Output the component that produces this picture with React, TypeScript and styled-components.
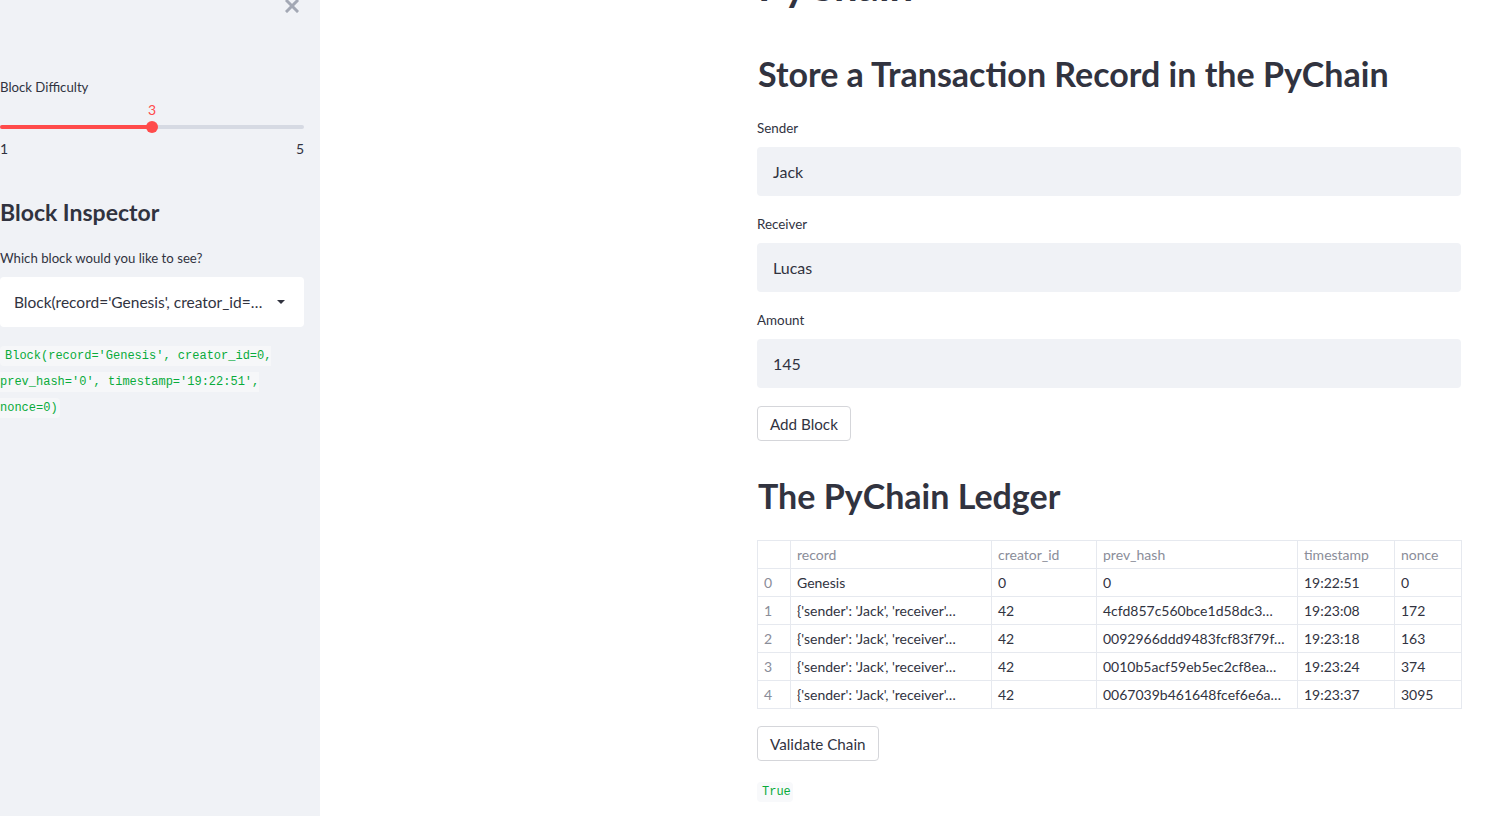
import React from "react";
import styled, { createGlobalStyle } from "styled-components";

const GlobalStyle = createGlobalStyle`
  html, body { margin: 0; padding: 0; }
  body {
    font-family: "Lato", "Noto Sans", sans-serif;
    color: #31333f;
    background: #ffffff;
    -webkit-font-smoothing: antialiased;
  }
  * { box-sizing: border-box; }
`;

const Page = styled.div`
  display: flex;
  width: 1500px;
  height: 816px;
  overflow: hidden;
`;

const Sidebar = styled.aside`
  width: 320px;
  flex: none;
  height: 816px;
  background: #f0f2f6;
  padding: 0 16px 0 0;
  display: flex;
  flex-direction: column;
`;

const CloseRow = styled.div`
  display: flex;
  justify-content: flex-end;
  margin-top: -1px;
  padding-right: 5px;
  height: 14px;
  color: #a3a8b4;
`;

const WidgetLabel = styled.div<{ $mt: number }>`
  margin-top: ${(p) => p.$mt}px;
  font-size: 13.2px;
  line-height: 20px;
  height: 20px;
  color: #31333f;
  white-space: nowrap;
`;

const SliderValue = styled.div`
  margin-top: 5px;
  height: 16px;
  line-height: 16px;
  font-size: 14px;
  color: #ff4b4b;
  display: flex;
  justify-content: center;
  width: 304px;
`;

const Track = styled.div`
  margin-top: 7px;
  position: relative;
  height: 4px;
  width: 304px;
  border-radius: 2px;
  background: #d6dae3;
`;

const TrackFill = styled.div`
  height: 4px;
  border-radius: 2px;
  background: #ff4b4b;
`;

const Thumb = styled.div`
  position: absolute;
  top: -4px;
  width: 12px;
  height: 12px;
  margin-left: -6px;
  border-radius: 50%;
  background: #ff4b4b;
`;

const TickRow = styled.div`
  margin-top: 10px;
  display: flex;
  justify-content: space-between;
  width: 304px;
  font-size: 14px;
  line-height: 20px;
  height: 20px;
`;

const SideHeading = styled.h2`
  margin: 38px 0 0;
  font-size: 23px;
  line-height: 30px;
  height: 30px;
  font-weight: 700;
  color: #31333f;
`;

const Select = styled.div`
  margin-top: 9px;
  width: 304px;
  height: 50px;
  background: #ffffff;
  border-radius: 4px;
  display: flex;
  align-items: center;
  padding: 0 18px 0 14px;
  font-size: 15.5px;
  gap: 12px;
`;

const SelectText = styled.span`
  flex: 1;
  white-space: nowrap;
  overflow: hidden;
`;

const CodePara = styled.p<{ $mt: number }>`
  margin: ${(p) => p.$mt}px 0 0;
  width: 304px;
  font-family: "Liberation Mono", "DejaVu Sans Mono", monospace;
  line-height: 26px;
  font-size: 12px;
`;

const Code = styled.code`
  font-family: "Liberation Mono", "DejaVu Sans Mono", monospace;
  font-size: 12px;
  line-height: 26px;
  color: #09ab3b;
  background: #f8f9fb;
  padding: 3px 2px 3px 5px;
  border-radius: 4px;
  -webkit-box-decoration-break: slice;
  box-decoration-break: slice;
`;

const SideCode = styled(Code)`
  background: #f6f7f9;
`;

const Main = styled.main`
  flex: 1;
  height: 816px;
  padding-left: 437px;
`;

const Content = styled.div`
  width: 704px;
  display: flex;
  flex-direction: column;
  align-items: flex-start;
`;

const Title = styled.h1`
  margin: -41px 0 0 1px;
  font-size: 42px;
  line-height: 53px;
  height: 53px;
  font-weight: 700;
  color: #31333f;
`;

const Heading = styled.h2<{ $mt: number }>`
  margin: ${(p) => p.$mt}px 0 0 1px;
  font-size: 34px;
  line-height: 40px;
  height: 40px;
  font-weight: 700;
  color: #31333f;
  white-space: nowrap;
`;

const FieldLabel = styled.div<{ $mt: number }>`
  margin-top: ${(p) => p.$mt}px;
  font-size: 13.4px;
  line-height: 20px;
  height: 20px;
`;

const Input = styled.div`
  margin-top: 9px;
  width: 704px;
  height: 49px;
  background: #f0f2f6;
  border-radius: 4px;
  display: flex;
  align-items: center;
  padding-left: 16px;
  font-size: 16px;
`;

const Button = styled.button<{ $mt: number }>`
  margin-top: ${(p) => p.$mt}px;
  height: 35px;
  padding: 0 12px;
  background: #ffffff;
  border: 1px solid #d5d6da;
  border-radius: 4px;
  font-family: inherit;
  font-size: 15.2px;
  color: #31333f;
  display: flex;
  align-items: center;
`;

const Table = styled.table`
  margin-top: 24px;
  width: 704px;
  table-layout: fixed;
  border-collapse: collapse;
  font-size: 14px;
`;

const Cell = styled.td<{ $muted?: boolean }>`
  border: 1px solid #e6e9ef;
  height: 28px;
  padding: 0 6px;
  white-space: nowrap;
  overflow: hidden;
  color: ${(p) => (p.$muted ? "#8a8d99" : "#31333f")};
`;

const HeadCell = styled.th`
  border: 1px solid #e6e9ef;
  height: 28px;
  padding: 0 6px;
  text-align: left;
  font-weight: 400;
  white-space: nowrap;
  overflow: hidden;
  color: #8a8d99;
`;

const cols = [33, 201, 105, 201, 97, 67];
const headers = ["", "record", "creator_id", "prev_hash", "timestamp", "nonce"];
const rec = "{'sender': 'Jack', 'receiver'\u2026";
const rows = [
  ["0", "Genesis", "0", "0", "19:22:51", "0"],
  ["1", rec, "42", "4cfd857c560bce1d58dc3\u2026", "19:23:08", "172"],
  ["2", rec, "42", "0092966ddd9483fcf83f79f\u2026", "19:23:18", "163"],
  ["3", rec, "42", "0010b5acf59eb5ec2cf8ea\u2026", "19:23:24", "374"],
  ["4", rec, "42", "0067039b461648fcef6e6a\u2026", "19:23:37", "3095"],
];

const CloseIcon = () => (
  <svg width="14" height="14" viewBox="0 0 14 14">
    <path d="M2 2 L12 12 M12 2 L2 12" stroke="currentColor" strokeWidth="3" strokeLinecap="square" />
  </svg>
);

const Caret = () => (
  <svg width="10" height="6" viewBox="0 0 10 6">
    <path d="M1 1 L9 1 L5 5 Z" fill="#31333f" />
  </svg>
);

export default function App() {
  return (
    <>
      <GlobalStyle />
      <Page>
        <Sidebar>
          <CloseRow>
            <CloseIcon />
          </CloseRow>
          <WidgetLabel $mt={64}>Block Difficulty</WidgetLabel>
          <SliderValue>3</SliderValue>
          <Track>
            <TrackFill style={{ width: "50%" }} />
            <Thumb style={{ left: "50%" }} />
          </Track>
          <TickRow>
            <span>1</span>
            <span>5</span>
          </TickRow>
          <SideHeading>Block Inspector</SideHeading>
          <WidgetLabel $mt={21}>Which block would you like to see?</WidgetLabel>
          <Select>
            <SelectText>Block(record='Genesis', creator_id=…</SelectText>
            <Caret />
          </Select>
          <CodePara $mt={16}>
            <SideCode>
              Block(record='Genesis', creator_id=0, prev_hash='0', timestamp='19:22:51', nonce=0)
            </SideCode>
          </CodePara>
        </Sidebar>
        <Main>
          <Content>
            <Title>PyChain</Title>
            <Heading $mt={42}>Store a Transaction Record in the PyChain</Heading>
            <FieldLabel $mt={24}>Sender</FieldLabel>
            <Input>Jack</Input>
            <FieldLabel $mt={18}>Receiver</FieldLabel>
            <Input>Lucas</Input>
            <FieldLabel $mt={18}>Amount</FieldLabel>
            <Input>145</Input>
            <Button $mt={18}>Add Block</Button>
            <Heading $mt={35}>The PyChain Ledger</Heading>
            <Table>
              <colgroup>
                {cols.map((w, i) => (
                  <col key={i} style={{ width: w }} />
                ))}
              </colgroup>
              <thead>
                <tr>
                  {headers.map((h, i) => (
                    <HeadCell key={i}>{h}</HeadCell>
                  ))}
                </tr>
              </thead>
              <tbody>
                {rows.map((r) => (
                  <tr key={r[0]}>
                    {r.map((c, i) => (
                      <Cell key={i} $muted={i === 0}>
                        {c}
                      </Cell>
                    ))}
                  </tr>
                ))}
              </tbody>
            </Table>
            <Button $mt={17}>Validate Chain</Button>
            <CodePara $mt={18}>
              <Code>True</Code>
            </CodePara>
          </Content>
        </Main>
      </Page>
    </>
  );
}
